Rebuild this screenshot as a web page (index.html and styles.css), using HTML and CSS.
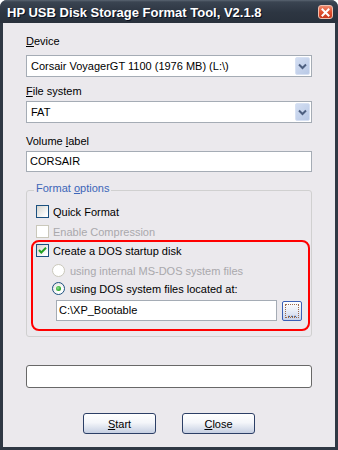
FILE: index.html
```html
<!DOCTYPE html>
<html lang="en">
<head>
    <meta charset="UTF-8">
    <title>HP USB Disk Storage Format Tool</title>
    <link rel="stylesheet" href="styles.css">
</head>
<body>
    <div class="window">
        <div class="titlebar">
            <span class="title">HP USB Disk Storage Format Tool, V2.1.8</span>
            <span class="close-btn">
                <svg width="9" height="9" viewBox="0 0 9 9"><path d="M1.5 1.5 L7.5 7.5 M7.5 1.5 L1.5 7.5" stroke="#fff" stroke-width="2" stroke-linecap="square"/></svg>
            </span>
        </div>

        <div class="client">
            <div class="label label-first"><u>D</u>evice</div>
            <div class="combo">
                <span class="combo-text">Corsair VoyagerGT 1100 (1976 MB) (L:\)</span>
                <span class="combo-arrow"><svg width="9" height="7" viewBox="0 0 9 7"><path d="M1 1.5 L4.5 5 L8 1.5" fill="none" stroke="#4d5f80" stroke-width="2"/></svg></span>
            </div>

            <div class="label"><u>F</u>ile system</div>
            <div class="combo">
                <span class="combo-text">FAT</span>
                <span class="combo-arrow"><svg width="9" height="7" viewBox="0 0 9 7"><path d="M1 1.5 L4.5 5 L8 1.5" fill="none" stroke="#4d5f80" stroke-width="2"/></svg></span>
            </div>

            <div class="label label-gap">Volume <u>l</u>abel</div>
            <div class="textbox">CORSAIR</div>

            <fieldset class="group">
                <legend>Format <u>o</u>ptions</legend>
                <div class="check-row row-first"><span class="checkbox"></span>Quick Format</div>
                <div class="check-row disabled"><span class="checkbox"></span>Enable Compression</div>

                <div class="highlight">
                    <div class="check-row"><span class="checkbox"><svg width="11" height="11" viewBox="0 0 11 11"><path d="M2 5 L4.3 7.5 L9 2.8" fill="none" stroke="#21a121" stroke-width="2"/></svg></span>Create a DOS startup disk</div>
                    <div class="radio-row disabled radio-first"><span class="radio"></span>using internal MS-DOS system files</div>
                    <div class="radio-row"><span class="radio selected"><span class="dot"></span></span>using DOS system files located at:</div>
                    <div class="path-row">
                        <div class="textbox path">C:\XP_Bootable</div>
                        <span class="browse"><span class="browse-focus">...</span></span>
                    </div>
                </div>
            </fieldset>

            <div class="progress"></div>

            <div class="buttons">
                <button class="btn"><u>S</u>tart</button>
                <button class="btn"><u>C</u>lose</button>
            </div>
        </div>
    </div>
</body>
</html>
```

FILE: styles.css
```css
* { margin: 0; padding: 0; box-sizing: border-box; }
body {
    background: #fff;
    font-family: "Liberation Sans", Arial, sans-serif;
    font-size: 11px;
    color: #000;
}
.window {
    width: 338px;
    height: 450px;
    background: #2f3844;
    border-radius: 7px 7px 0 0;
    display: flex;
    flex-direction: column;
}
.titlebar {
    height: 23px;
    display: flex;
    align-items: center;
    justify-content: space-between;
    padding: 0 5px 0 7px;
    border-radius: 7px 7px 0 0;
    background: linear-gradient(#5a6572 0, #3a4451 2px, #2d3642 12px, #29313c 100%);
}
.title {
    font-family: "Liberation Sans", Arial, sans-serif;
    font-weight: bold;
    font-size: 13px;
    color: #fff;
    text-shadow: 1px 1px 0 #0a1020;
    padding-top: 1px;
}
.close-btn {
    width: 15px;
    height: 14px;
    margin-top: 1px;
    border-radius: 3px;
    border: 1px solid #f0c0b0;
    background: linear-gradient(#f08a6e, #e0502e 50%, #c8381c);
    display: flex;
    align-items: center;
    justify-content: center;
}
.client {
    flex: 1;
    margin: 0 3px 3px;
    background: #ebe9ed;
    padding: 12px 23px 0;
}
.label { height: 13px; line-height: 13px; margin: 8px 0 3px; }
.label-first { margin: 0 0 7px; }
.label-gap { margin-top: 12px; }

.combo {
    height: 22px;
    background: #fff;
    border: 1px solid #a5acb5;
    display: flex;
    align-items: center;
    padding: 1px;
}
.combo-text { flex: 1; padding-left: 3px; }
.combo-arrow {
    width: 15px;
    height: 18px;
    border: 1px solid #d7e1f3;
    border-radius: 2px;
    background: linear-gradient(135deg, #d3def2, #b9c9e6);
    display: flex;
    align-items: center;
    justify-content: center;
}
.textbox {
    height: 21px;
    line-height: 19px;
    background: #fff;
    border: 1px solid #a5acb5;
    padding-left: 3px;
}

.group {
    margin-top: 10px;
    border: 1px solid #d0d0d0;
    border-radius: 3px;
    padding: 6px 0 0;
    min-width: 0;
}
.group legend {
    margin-left: 7px;
    padding: 0 2px 4px;
    line-height: 13px;
    color: #3d66b8;
}

.check-row, .radio-row {
    height: 13px;
    display: flex;
    align-items: center;
    margin-left: 9px;
    margin-top: 7px;
}
.row-first { margin-top: 0; }
.disabled { color: #a9a8ac; }
.checkbox {
    width: 13px;
    height: 13px;
    margin-right: 4px;
    border: 1px solid #1c5180;
    background: linear-gradient(135deg, #d6d5cf, #fff 85%);
    display: flex;
    align-items: center;
    justify-content: center;
}
.disabled .checkbox { border-color: #cac8bb; background: #fff; }

.highlight {
    margin: 2px 1px 5px 4px;
    border: 2px solid #f00;
    border-radius: 8px;
    padding: 2px 0 8px;
}
.highlight .check-row { margin: 0 0 0 3px; }
.highlight .radio-row { margin-left: 19px; margin-top: 5px; }
.highlight .radio-first { margin-top: 7px; }
.radio {
    width: 13px;
    height: 13px;
    margin-right: 5px;
    border-radius: 50%;
    border: 1px solid #1c5180;
    background: radial-gradient(circle at 65% 70%, #fff 30%, #dcdbd5);
    display: flex;
    align-items: center;
    justify-content: center;
}
.disabled .radio { border-color: #cac8bb; background: #fff; }
.dot {
    width: 5px;
    height: 5px;
    border-radius: 50%;
    background: radial-gradient(circle at 40% 40%, #8fe08f, #21a121 70%);
}

.path-row {
    display: flex;
    align-items: center;
    margin: 5px 0 0 23px;
}
.textbox.path { width: 221px; padding-left: 2px; }
.browse {
    width: 20px;
    height: 20px;
    margin-left: 5px;
    border: 1px solid #3a5fb5;
    border-radius: 2px;
    background: linear-gradient(#fff, #eef1f8 40%, #c6d2ec);
    padding: 2px;
    display: flex;
}
.browse-focus {
    flex: 1;
    border: 1px dotted #9a6a4c;
    font-size: 11px;
    line-height: 16px;
    text-align: center;
}

.progress {
    margin-top: 28px;
    height: 23px;
    background: #fff;
    border: 1px solid #686868;
    border-radius: 3px;
}

.buttons {
    display: flex;
    justify-content: center;
    gap: 26px;
    margin-top: 25px;
}
.btn {
    width: 73px;
    height: 21px;
    font-family: "Liberation Sans", Arial, sans-serif;
    font-size: 11px;
    color: #000;
    border: 1px solid #2c3f66;
    border-radius: 3px;
    background: linear-gradient(#fff, #f4f6fa 45%, #c5cfe2);
}
```
